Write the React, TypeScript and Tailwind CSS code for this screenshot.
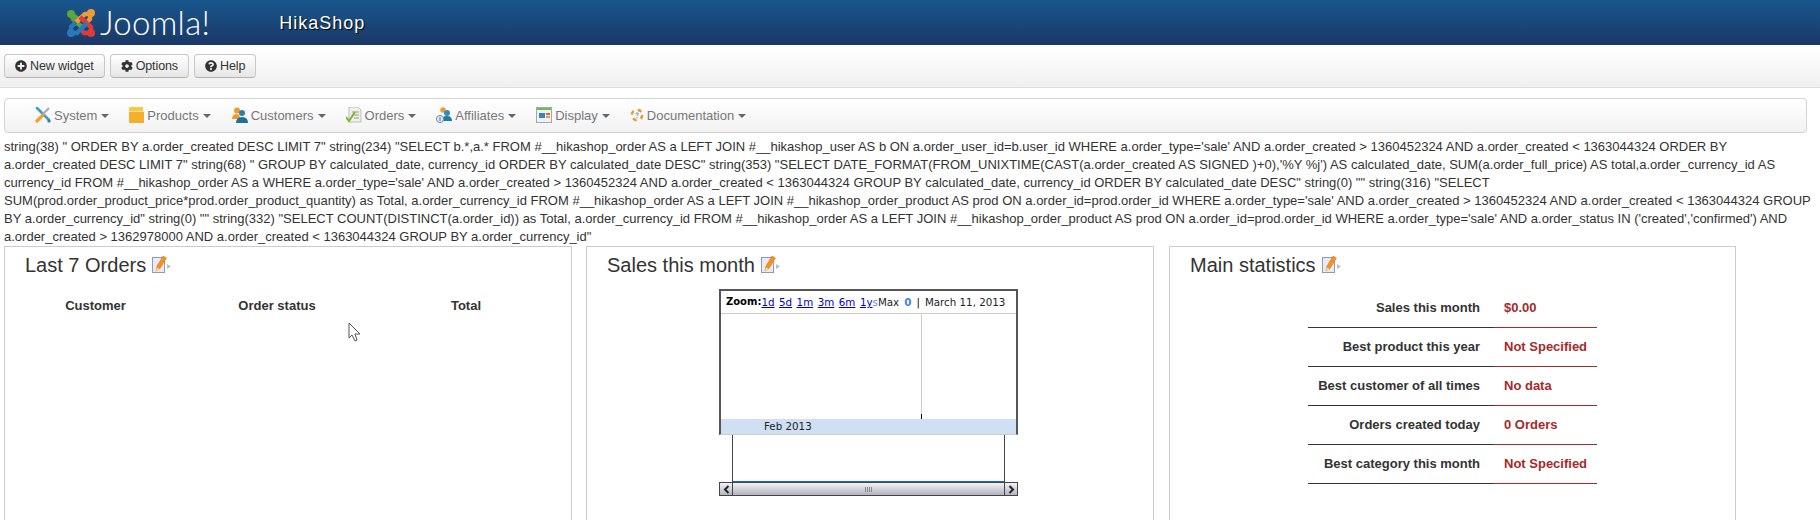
import { FaCog, FaPlusCircle, FaQuestionCircle } from 'react-icons/fa';

const debugText = `string(38) " ORDER BY a.order_created DESC LIMIT 7" string(234) "SELECT b.*,a.* FROM #__hikashop_order AS a LEFT JOIN #__hikashop_user AS b ON a.order_user_id=b.user_id WHERE a.order_type='sale' AND a.order_created > 1360452324 AND a.order_created < 1363044324 ORDER BY a.order_created DESC LIMIT 7" string(68) " GROUP BY calculated_date, currency_id ORDER BY calculated_date DESC" string(353) "SELECT DATE_FORMAT(FROM_UNIXTIME(CAST(a.order_created AS SIGNED )+0),'%Y %j') AS calculated_date, SUM(a.order_full_price) AS total,a.order_currency_id AS currency_id FROM #__hikashop_order AS a WHERE a.order_type='sale' AND a.order_created > 1360452324 AND a.order_created < 1363044324 GROUP BY calculated_date, currency_id ORDER BY calculated_date DESC" string(0) "" string(316) "SELECT SUM(prod.order_product_price*prod.order_product_quantity) as Total, a.order_currency_id FROM #__hikashop_order AS a LEFT JOIN #__hikashop_order_product AS prod ON a.order_id=prod.order_id WHERE a.order_type='sale' AND a.order_created > 1360452324 AND a.order_created < 1363044324 GROUP BY a.order_currency_id" string(0) "" string(332) "SELECT COUNT(DISTINCT(a.order_id)) as Total, a.order_currency_id FROM #__hikashop_order AS a LEFT JOIN #__hikashop_order_product AS prod ON a.order_id=prod.order_id WHERE a.order_type='sale' AND a.order_status IN ('created','confirmed') AND a.order_created > 1362978000 AND a.order_created < 1363044324 GROUP BY a.order_currency_id"`;

const stats = [
  { label: 'Sales this month', value: '$0.00' },
  { label: 'Best product this year', value: 'Not Specified' },
  { label: 'Best customer of all times', value: 'No data' },
  { label: 'Orders created today', value: '0 Orders' },
  { label: 'Best category this month', value: 'Not Specified' },
];

function JoomlaMark() {
  return (
    <svg width="30" height="30" viewBox="0 0 30 30" fill="none" strokeWidth="4.4">
      <path d="M6 6 L7 11 L17 20" stroke="#5ba53b" />
      <path d="M7 7 L12 11" stroke="#5ba53b" />
      <circle cx="5" cy="6" r="4" fill="#5ba53b" />
      <path d="M25 6 L19 6 L8 16" stroke="#f09a38" />
      <path d="M24 6 L24 11 L20 15" stroke="#f09a38" />
      <circle cx="25" cy="5" r="4" fill="#f09a38" />
      <path d="M25 25 L25 19 L14 9" stroke="#e23a34" />
      <path d="M24 25 L18 25 L14 20" stroke="#e23a34" />
      <circle cx="25" cy="25" r="4" fill="#e23a34" />
      <path d="M5 25 L11 25 L21 15" stroke="#2a78bc" />
      <path d="M5 24 L5 19 L10 14" stroke="#2a78bc" />
      <circle cx="5" cy="25" r="4" fill="#2a78bc" />
    </svg>
  );
}

function EditIcon() {
  return (
    <svg width="20" height="18" viewBox="0 0 20 18" className="shrink-0">
      <rect x="0.5" y="1.5" width="12" height="15" fill="#e8ebf4" stroke="#8f9ab8" />
      <path d="M15 8 L19 10.5 L15 13 Z" fill="#b9bdc6" />
      <path d="M4 15 L5 10 L11 0 L14.5 2 L8 12.5 Z" fill="#f29322" stroke="#de6a10" strokeWidth="0.5" />
      <path d="M4 15 L5 11.5 L7.5 13 Z" fill="#f7e3b0" />
    </svg>
  );
}

const menuIcons = [
  // System: wrench and screwdriver
  <svg key="system" width="16" height="16" viewBox="0 0 16 16">
    <path d="M2 1 L4 3 L14 13" stroke="#3f9bc8" strokeWidth="2.6" strokeLinecap="round" fill="none" />
    <circle cx="14" cy="14" r="1.6" fill="#2f7ea8" />
    <path d="M14 1 L8 7" stroke="#9fb0bb" strokeWidth="2.2" />
    <path d="M8 8 L2 14" stroke="#f0a030" strokeWidth="3.2" strokeLinecap="round" />
  </svg>,
  // Products: yellow folder box
  <svg key="products" width="15" height="16" viewBox="0 0 15 16">
    <path d="M0 1 Q0 0 1 0 H13 Q14 0 14 1 V4 H0 Z" fill="#f9c743" />
    <rect x="0" y="4" width="15" height="12" fill="#f4b02c" />
    <rect x="0" y="4" width="15" height="1" fill="#ffe08a" />
  </svg>,
  // Customers: two people
  <svg key="customers" width="17" height="16" viewBox="0 0 17 16">
    <circle cx="6" cy="3.5" r="3" fill="#f29a2e" />
    <path d="M1 12 Q1 7 6 7 Q9 7 9 12 Z" fill="#f29a2e" />
    <circle cx="11" cy="6" r="3" fill="#2f7ea8" />
    <path d="M5 16 Q5 10 11 10 Q17 10 17 16 Z" fill="#1f6f98" />
  </svg>,
  // Orders: list with green check
  <svg key="orders" width="16" height="16" viewBox="0 0 16 16">
    <path d="M3 0 H12 L15 3 V15 H3 Z" fill="#eef0ea" stroke="#a8aca0" strokeWidth="0.7" />
    <path d="M6 5 H13 M7 8 H13 M8 11 H13" stroke="#9a9a90" strokeWidth="1" />
    <path d="M0 10 L3 14 L9 5" stroke="#7cb82f" strokeWidth="2" fill="none" />
  </svg>,
  // Affiliates: person with coin
  <svg key="affiliates" width="16" height="16" viewBox="0 0 16 16">
    <circle cx="7" cy="3" r="2.7" fill="#f29a2e" />
    <circle cx="11" cy="6" r="3" fill="#2f8ec0" />
    <path d="M5 14 Q5 9 11 9 Q16 9 16 14 Z" fill="#1f7aa8" />
    <circle cx="4" cy="12" r="3.6" fill="#e4ecf4" stroke="#6f8fb0" />
    <path d="M4 10 V14" stroke="#3f6f9f" />
  </svg>,
  // Display: window with green title bar
  <svg key="display" width="16" height="16" viewBox="0 0 16 16">
    <rect x="0.5" y="0.5" width="15" height="15" fill="#f0f2f5" stroke="#a0a8b0" />
    <rect x="1" y="1" width="14" height="2" fill="#6fbf4f" />
    <rect x="3" y="6" width="6" height="5" fill="#3f7fc8" />
    <rect x="10" y="6" width="4" height="2" fill="#e0603f" />
    <rect x="10" y="9" width="4" height="2" fill="#e8a040" />
  </svg>,
  // Documentation: orange ring with question mark
  <svg key="documentation" width="14" height="14" viewBox="0 0 14 14">
    <circle cx="7" cy="7" r="5.2" fill="none" stroke="#e89a30" strokeWidth="2.6" strokeDasharray="4 4.2" />
    <circle cx="7" cy="7" r="3.4" fill="#fdfdfd" />
    <path d="M5.6 5.6 Q7 4 8.4 5.6 Q8.4 6.6 7 7.4 V8.2 M7 9.2 V10" stroke="#4f86c0" strokeWidth="1" fill="none" />
  </svg>,
];

const menuLabels = ['System', 'Products', 'Customers', 'Orders', 'Affiliates', 'Display', 'Documentation'];

function ToolbarButton({ icon, label }: { icon: React.ReactNode; label: string }) {
  return (
    <button className="flex h-[24px] items-center gap-[3px] rounded-[4px] border border-[#c8c8c8] border-b-[#b3b3b3] bg-gradient-to-b from-white to-[#e6e6e6] px-[10px] text-[12.5px] tracking-[-0.1px] text-[#333]">
      {icon}
      {label}
    </button>
  );
}

function WidgetTitle({ title }: { title: string }) {
  return (
    <div className="flex h-[36px] items-center gap-[6px] pl-[20px] text-[20px] text-[#333]">
      {title}
      <EditIcon />
    </div>
  );
}

function SalesChart() {
  return (
    <div className="ml-[132px] mt-[6px] w-[299px] font-['DejaVu_Sans',sans-serif] text-[10.3px] text-[#222]">
      <div className="border-x-2 border-t-2 border-b border-x-[#555] border-t-[#555] border-b-[#ccc]">
        <div className="flex h-[23px] items-center whitespace-nowrap border-b border-[#ccc] pl-[5px]">
          <b className="text-[10px] text-black">Zoom:</b>
          <span className="flex gap-[4.5px] text-[#0000cc] underline">
            <span>1d</span>
            <span>5d</span>
            <span>1m</span>
            <span>3m</span>
            <span>6m</span>
            <span>1y</span>
          </span>
          <span className="text-[#4f8fef]">s</span>
          <span>Max</span>
          <b className="ml-[5px] text-[#3f7fef]">0</b>
          <span className="ml-[5px] mr-[5px] text-black">|</span>
          <span>March 11, 2013</span>
        </div>
        <div className="flex h-[105px] justify-end pr-[94px]">
          <div className="flex h-full w-px items-end bg-[#ccc]">
            <div className="h-[5px] w-px bg-black" />
          </div>
        </div>
        <div className="h-[15px] bg-[#cfe0f5] pl-[43px] leading-[15px]">Feb 2013</div>
      </div>
      <div className="mx-[13px] flex h-[47px] flex-col justify-end border-x border-[#444]">
        <div className="h-px bg-[#0a6fd8]" />
      </div>
      <div className="flex h-[14px] items-stretch border border-[#444] bg-gradient-to-b from-[#f2f2f6] to-[#b4b4c0]">
        <div className="flex w-[13px] items-center justify-center border-r border-[#444]">
          <svg width="7" height="9" viewBox="0 0 7 9"><path d="M5.5 1 L2 4.5 L5.5 8" stroke="#222" strokeWidth="2" fill="none" /></svg>
        </div>
        <div className="flex flex-1 items-center justify-center">
          <div className="h-[5px] w-[7px] bg-[repeating-linear-gradient(90deg,#888_0,#888_1px,transparent_1px,transparent_2px)]" />
        </div>
        <div className="flex w-[13px] items-center justify-center border-l border-[#444]">
          <svg width="7" height="9" viewBox="0 0 7 9"><path d="M1.5 1 L5 4.5 L1.5 8" stroke="#222" strokeWidth="2" fill="none" /></svg>
        </div>
      </div>
    </div>
  );
}

export default function App() {
  return (
    <div className="relative h-[520px] w-[1820px] overflow-hidden bg-white font-['Liberation_Sans',Arial,sans-serif] text-[13px] leading-[18px] text-[#333]">
      <header className="flex h-[45px] items-center bg-gradient-to-b from-[#17578e] to-[#1a3867]">
        <div className="ml-[66px] flex items-center">
          <JoomlaMark />
          <span className="ml-[4px] font-['Lato',sans-serif] text-[33px] leading-none font-light tracking-[0.3px] text-white">
            Joomla!
          </span>
        </div>
        <span className="ml-[69px] text-[18px] tracking-[1px] text-white [text-shadow:1px_1px_1px_#000]">HikaShop</span>
      </header>

      <div className="flex h-[43px] items-start gap-[5px] border-b border-[#ddd] bg-gradient-to-b from-white to-[#f0f0f0] pl-[4px] pt-[9px]">
        <ToolbarButton icon={<FaPlusCircle className="text-[12px] text-[#333]" />} label="New widget" />
        <ToolbarButton icon={<FaCog className="text-[12px] text-[#333]" />} label="Options" />
        <ToolbarButton icon={<FaQuestionCircle className="text-[12px] text-[#333]" />} label="Help" />
      </div>

      <nav className="mx-[4px] mt-[10px] mr-[13px] flex h-[35px] items-center gap-[20px] rounded-[4px] border border-[#d4d4d4] bg-gradient-to-b from-white to-[#f2f2f2] pl-[30px] pt-[1px] text-[13px] text-[#777]">
        {menuLabels.map((label, i) => (
          <div key={label} className="flex items-center">
            <div className="mr-[3px] -mt-[3px]">{menuIcons[i]}</div>
            {label}
            <span className="ml-[4px] h-0 w-0 border-x-[4px] border-t-[4px] border-x-transparent border-t-[#666]" />
          </div>
        ))}
      </nav>

      <p className="px-[4px] pt-[5px]">{debugText}</p>

      <div className="flex gap-[14px] pl-[4px]">
        <section className="h-[300px] w-[568px] border border-[#ccc]">
          <WidgetTitle title="Last 7 Orders" />
          <table className="mt-[14px] w-[559px] table-fixed">
            <thead>
              <tr className="font-bold">
                <th className="w-[181px]">Customer</th>
                <th className="w-[182px]">Order status</th>
                <th className="w-[196px]">Total</th>
              </tr>
            </thead>
          </table>
        </section>

        <section className="h-[300px] w-[568px] border border-[#ccc]">
          <WidgetTitle title="Sales this month" />
          <SalesChart />
        </section>

        <section className="ml-[1px] h-[300px] w-[567px] border border-[#ccc]">
          <WidgetTitle title="Main statistics" />
          <div className="ml-[138px] mt-[6px] w-[289px]">
            {stats.map((s) => (
              <div key={s.label} className="flex h-[39px] font-bold">
                <div className="flex w-[186px] items-center justify-end border-b border-[#333] pr-[14px] pb-[1px]">
                  {s.label}
                </div>
                <div className="flex w-[103px] items-center border-b border-[#a52a2a] pl-[10px] pb-[1px] text-[#a52a2a]">
                  {s.value}
                </div>
              </div>
            ))}
          </div>
        </section>
      </div>

      {/* mouse pointer left in the capture */}
      <svg className="absolute left-[348px] top-[322px]" width="13" height="21" viewBox="0 0 13 21">
        <path d="M1 1 V16 L4 13 L7 19 L9 18 L7 12 L12 12 Z" fill="#fff" stroke="#555" />
      </svg>
    </div>
  );
}
